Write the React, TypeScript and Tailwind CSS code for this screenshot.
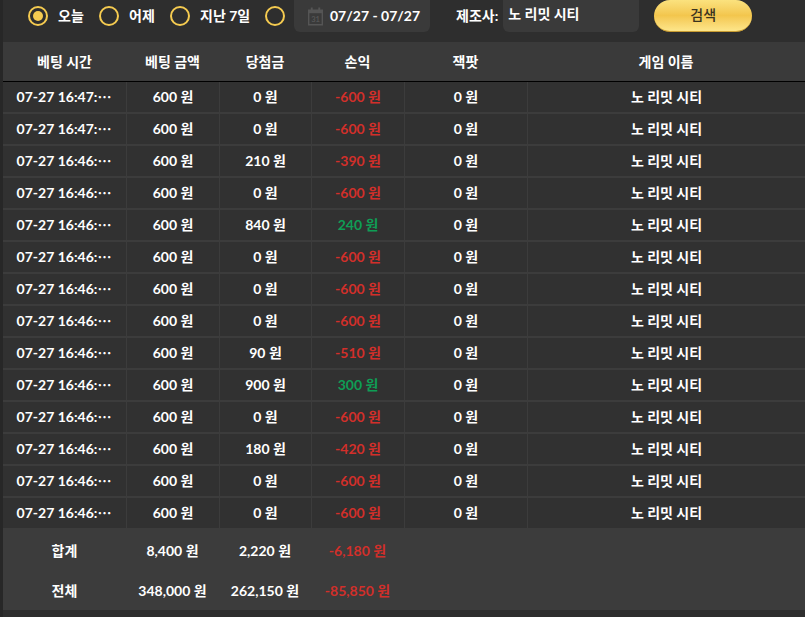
const rows = [
  ["07-27 16:47:", "600 원", "0 원", "-600 원"],
  ["07-27 16:47:", "600 원", "0 원", "-600 원"],
  ["07-27 16:46:", "600 원", "210 원", "-390 원"],
  ["07-27 16:46:", "600 원", "0 원", "-600 원"],
  ["07-27 16:46:", "600 원", "840 원", "240 원"],
  ["07-27 16:46:", "600 원", "0 원", "-600 원"],
  ["07-27 16:46:", "600 원", "0 원", "-600 원"],
  ["07-27 16:46:", "600 원", "0 원", "-600 원"],
  ["07-27 16:46:", "600 원", "90 원", "-510 원"],
  ["07-27 16:46:", "600 원", "900 원", "300 원"],
  ["07-27 16:46:", "600 원", "0 원", "-600 원"],
  ["07-27 16:46:", "600 원", "180 원", "-420 원"],
  ["07-27 16:46:", "600 원", "0 원", "-600 원"],
  ["07-27 16:46:", "600 원", "0 원", "-600 원"],
]

const Radio = ({ label, checked, className }: { label?: string; checked?: boolean; className: string }) => (
  <div className={"flex items-center " + className}>
    <span className="flex h-5 w-5 items-center justify-center rounded-full border-2 border-[#f5cb50]">
      {checked && <span className="h-2.5 w-2.5 rounded-full bg-[#f5cb50]" />}
    </span>
    {label && <span className="ml-[10px] pb-[2px]">{label}</span>}
  </div>
)

const Cell = ({ children, className }: { children: React.ReactNode; className: string }) => (
  <div className={"flex items-center justify-center border-r border-[#3c3c3c] pb-[2px] " + className}>{children}</div>
)

const CalendarIcon = () => (
  <svg width="15" height="19" viewBox="0 0 16 19" className="shrink-0">
    <path d="M3 0h2v2h6V0h2v2h3v17H0V2h3z" fill="#555" />
    <rect x="1.5" y="6" width="13" height="11.5" fill="#3a3a3a" />
    <text x="8" y="15.5" textAnchor="middle" fontSize="8" fontWeight="700" fill="#555">31</text>
  </svg>
)

const App = (): JSX.Element => {
  return (
    <div className="h-[617px] w-[805px] overflow-hidden bg-[#2e2e2e] text-[14px] font-bold text-white [font-family:Lato,'Noto_Sans_CJK_KR',sans-serif]">
      <div className="h-full border-l-[3px] border-[#272727]">
        <div className="flex h-[42px] items-start">
          <div className="flex h-[32px] items-center pl-[25px]">
            <Radio label="오늘" checked className="w-[71px]" />
            <Radio label="어제" className="w-[71px]" />
            <Radio label="지난 7일" className="w-[95px]" />
            <Radio className="w-[29px]" />
          </div>
          <div className="flex h-[32px] w-[136px] items-center rounded-b-md bg-[#3a3a3a] pl-[14px]">
            <CalendarIcon />
            <span className="ml-[7px] pb-[2px]">07/27 - 07/27</span>
          </div>
          <div className="flex h-[32px] items-center pl-[26px]">
            <span className="pb-[2px]">제조사:</span>
            <div className="ml-[5px] flex h-[32px] w-[136px] items-start rounded-b-md bg-[#3a3a3a] pl-[5px] pt-[3px]">노 리밋 시티</div>
          </div>
          <button className="ml-[15px] h-[32px] w-[98px] rounded-[16px] border-b border-[#c99d33] bg-gradient-to-b from-[#fbe27e] via-[#f3c64d] to-[#fde68a] pb-[2px] font-medium text-[#3a3320]">검색</button>
        </div>
        <div className="flex h-[40px] border-b border-black bg-[#3a3a3a]">
          <div className="flex w-[123px] items-center justify-center">베팅 시간</div>
          <div className="flex w-[93px] items-center justify-center">베팅 금액</div>
          <div className="flex w-[92px] items-center justify-center">당첨금</div>
          <div className="flex w-[93px] items-center justify-center">손익</div>
          <div className="flex w-[123px] items-center justify-center">잭팟</div>
          <div className="flex flex-1 items-center justify-center">게임 이름</div>
        </div>
        {rows.map((r, i) => (
          <div key={i} className={i === rows.length - 1 ? "flex h-[30px] bg-[#313131]" : "flex h-[32px] border-b-2 border-[#3c3c3c] bg-[#313131]"}>
            <Cell className="w-[124px] pr-px">{r[0]}<span className="[font-family:'Noto_Sans_CJK_KR',sans-serif]">⋯</span></Cell>
            <Cell className="w-[93px]">{r[1]}</Cell>
            <Cell className="w-[92px]">{r[2]}</Cell>
            <Cell className={"w-[93px] " + (r[3].startsWith("-") ? "text-[#d22f2a]" : "text-[#0f9d55]")}>{r[3]}</Cell>
            <Cell className="w-[123px]">0 원</Cell>
            <div className="flex flex-1 items-center justify-center pb-[2px]">노 리밋 시티</div>
          </div>
        ))}
        <div className="bg-[#3c3c3c]">
          <div className="flex h-[42px] items-center pt-[2px]">
            <div className="w-[123px] text-center">합계</div>
            <div className="w-[93px] text-center">8,400 원</div>
            <div className="w-[92px] text-center">2,220 원</div>
            <div className="w-[93px] text-center text-[#d22f2a]">-6,180 원</div>
          </div>
          <div className="flex h-[40px] items-center">
            <div className="w-[123px] text-center">전체</div>
            <div className="w-[93px] text-center">348,000 원</div>
            <div className="w-[92px] text-center">262,150 원</div>
            <div className="w-[93px] text-center text-[#d22f2a]">-85,850 원</div>
          </div>
        </div>
      </div>
    </div>
  )
}

export default App
